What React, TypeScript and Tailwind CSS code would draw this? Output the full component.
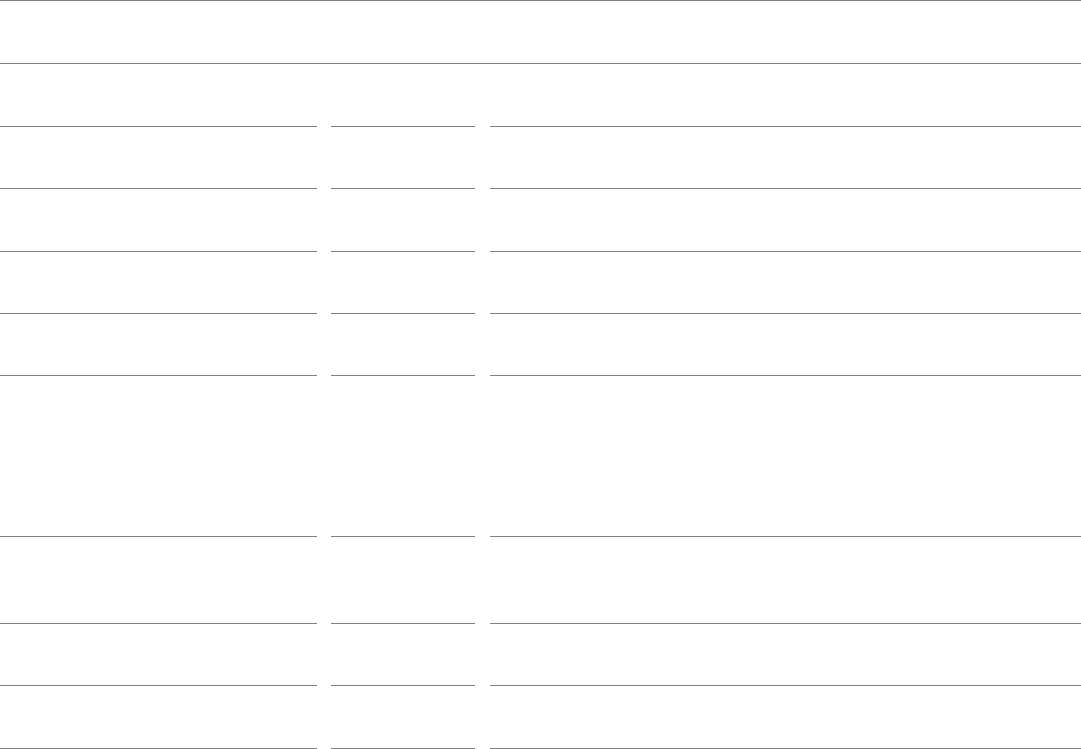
import React from "react";

const rowHeights = [61, 62, 61, 61, 160, 86, 61, 62];

function Cell({ className, h, first }: { className: string; h: number; first: boolean }) {
  return (
    <div
      className={`${className} border-b border-[#808080] ${first ? "border-t" : ""}`}
      style={{ height: h + (first ? 2 : 1) }}
    />
  );
}

export default function App() {
  return (
    <div className="w-[1081px] h-[749px] bg-white overflow-hidden font-['Liberation_Sans',sans-serif]">
      <div className="border-t border-b border-[#808080] h-[64px]" />
      <div className="h-[62px]" />
      <div className="flex flex-col">
        {rowHeights.map((h, i) => (
          <div key={i} className="flex">
            <Cell className="w-[317px]" h={h} first={i === 0} />
            <Cell className="ml-[14px] w-[144px]" h={h} first={i === 0} />
            <Cell className="ml-[15px] flex-1" h={h} first={i === 0} />
          </div>
        ))}
      </div>
    </div>
  );
}
